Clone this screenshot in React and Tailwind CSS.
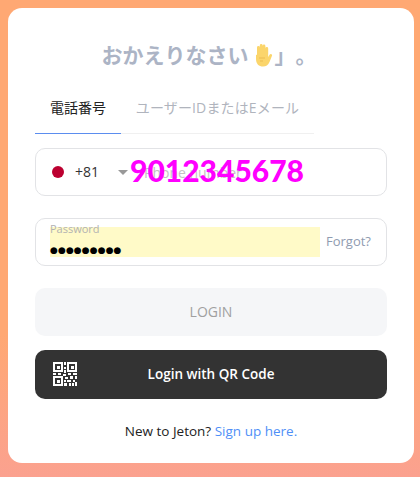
import React from 'react';

const QrIcon = () => (
  <svg width="24" height="24" viewBox="0 0 24 24" fill="#fff" shapeRendering="crispEdges">
    <path fillRule="evenodd" d="M0 0h10v10H0zM2 2v6h6V2zM3.500 3.500h3v3h-3zM14 0h10v10H14zM16 2v6h6V2zM17.500 3.500h3v3h-3zM0 14h10v10H0zM2 16v6h6v-6zM3.500 17.500h3v3h-3z" />
    <path d="M11 0h2v3h-2zM11 5h2v2h-2zM11 8h2v3h-2zM0 11h3v2H0zM5 11h3v2H5zM10 12h3v2h-3zM15 11h3v2h-3zM20 11h4v2h-4zM12 15h3v2h-3zM17 14h3v3h-3zM22 14h2v3h-2zM11 18h2v2h-2zM14 18h4v2h-4zM20 18h2v2h-2zM11 21h3v3h-3zM16 21h2v3h-2zM19 21h2v3h-2zM22 20h2v4h-2z" />
  </svg>
);

const HandIcon = () => (
  <svg width="22" height="24" viewBox="0 0 22 24" className="mx-[2px] shrink-0">
    <path
      fill="#fbd56b"
      d="M6 12V4.500a1.400 1.400 0 0 1 2.800 0V2.500a1.400 1.400 0 0 1 2.800 0V3a1.400 1.400 0 0 1 2.800 0v2.500a1.400 1.400 0 0 1 2.800 0V14l1.500-2.500c.8-1.300 3-.3 2.300 1.300L18.500 19c-1.200 3-3.500 4.500-6.500 4.500-4 0-7-2.500-7-7.500v-3.500a.5.5 0 0 1 1-.5z"
    />
    <path fill="none" stroke="#eab64c" strokeWidth="0.8" d="M8 15h6M9 18h3" />
  </svg>
);

const App = () => {
  return (
    <div className="h-[477px] w-[420px] overflow-hidden bg-gradient-to-b from-[#ffa873] from-70% to-[#fba18f] pt-2 pl-2 font-['Open_Sans','Noto_Sans_CJK_JP',sans-serif]">
      <div className="h-[455px] w-[406px] rounded-[14px] bg-white px-[27px]">
        <h1 className="flex h-[62px] items-end justify-center pr-[4px] text-[21px] leading-[30px] font-bold text-[#acb4c5] [text-spacing-trim:space-all]">
          おかえりなさい
          <span className="mb-[3px]"><HandIcon /></span>
          」。
        </h1>

        {/* Tabs */}
        <div className="mt-[6px] flex h-[58px] w-[279px] border-b border-[#f0f0f0] text-sm">
          <div className="-mb-px flex w-[86px] items-center justify-center border-b border-[#5b8def] pt-[6px] text-[#222]">
            電話番号
          </div>
          <div className="flex flex-1 items-center justify-center pt-[6px] tracking-[0.150px] text-[#b0b4bd]">
            ユーザーIDまたはEメール
          </div>
        </div>

        {/* Phone */}
        <div className="mt-[14px] flex h-[48px] items-center rounded-[10px] border border-[#e2e3e6] pl-[16px]">
          <span className="h-[12px] w-[12px] rounded-full bg-[#bc0030]" />
          <span className="ml-[11px] text-sm text-[#333]">+81</span>
          <span className="ml-[19px] h-0 w-0 border-x-[5px] border-t-[5px] border-x-transparent border-t-[#999]" />
          <div className="relative ml-[2px] flex-1">
            <span className="pl-[14px] text-sm text-[#c4c4c4]">Phone number</span>
            <span className="absolute top-[-7px] left-0 font-['Lato',sans-serif] text-[30px] leading-[34px] font-black text-[#ff00ff]">
              9012345678
            </span>
          </div>
        </div>

        {/* Password */}
        <div className="mt-[22px] flex h-[48px] items-center rounded-[10px] border border-[#e2e3e6] pl-[14px]">
          <div className="relative h-[30px] w-[270px] bg-[#fffac8] pt-[15px]">
            <span className="absolute top-[-6px] left-0 text-[11px] leading-4 text-[#b2b2b2]">Password</span>
            <span className="block font-['DejaVu_Sans',sans-serif] text-[9px] leading-4 tracking-[0.100px] text-black">●●●●●●●●●</span>
          </div>
          <span className="ml-[6px] text-[13px] text-[#8f9bb0]">Forgot?</span>
        </div>

        {/* Buttons */}
        <button className="mt-[22px] block h-[48px] w-full rounded-[10px] bg-[#f5f6f8] text-sm font-medium text-[#a0a0a0]">
          LOGIN
        </button>
        <button className="relative mt-[14px] flex h-[49px] w-full items-center justify-center rounded-[10px] bg-[#333] text-[13.500px] font-semibold text-white">
          <span className="absolute top-[12px] left-[18px]"><QrIcon /></span>
          Login with QR Code
        </button>

        <p className="mt-[22px] text-center text-[13.500px] text-[#222]">
          New to Jeton? <span className="text-[#4f8ff7]">Sign up here.</span>
        </p>
      </div>
    </div>
  );
};

export default App;
